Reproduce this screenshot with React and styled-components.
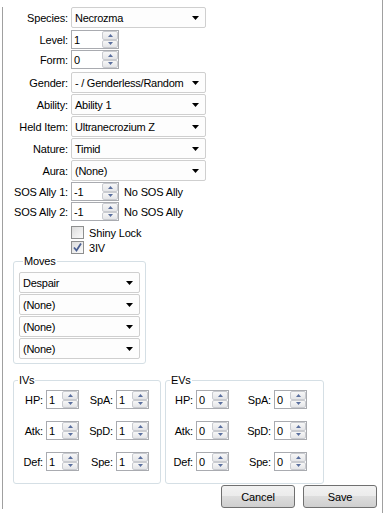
import styled, { createGlobalStyle } from 'styled-components';

const GlobalStyle = createGlobalStyle`
  body {
    margin: 0;
    background: #fff;
    font-family: "Liberation Sans", Arial, sans-serif;
    font-size: 11px;
    letter-spacing: -0.15px;
    color: #000;
  }
`;

const Arrow = ({ up, color = '#000', w = 7, h = 4 }) => (
  <svg width={w} height={h} viewBox={`0 0 ${w} ${h}`} style={{ display: 'block' }}>
    <polygon
      points={up ? `0,${h} ${w / 2},0 ${w},${h}` : `0,0 ${w},0 ${w / 2},${h}`}
      fill={color}
    />
  </svg>
);

const Combo = ({ value, width = 135 }) => (
  <ComboBox $width={width}>
    <ComboText>{value}</ComboText>
    <ComboArrow>
      <Arrow />
    </ComboArrow>
  </ComboBox>
);

const Spinner = ({ value, width = 48, height = 19 }) => (
  <NumBox $width={width} $h={height}>
    <NumText>{value}</NumText>
    <SpinCol>
      <SpinBtn>
        <Arrow up color="#5a6f9e" w={5} h={3} />
      </SpinBtn>
      <SpinBtn>
        <Arrow color="#5a6f9e" w={5} h={3} />
      </SpinBtn>
    </SpinCol>
  </NumBox>
);

const Check = ({ checked, label }) => (
  <CheckWrap>
    <CheckBox>
      {checked && (
        <svg width="11" height="11" viewBox="0 0 11 11">
          <path d="M2 5.5 L4.5 8.5 L9 1.5" stroke="#4a5f92" strokeWidth="1.8" fill="none" />
        </svg>
      )}
    </CheckBox>
    {label}
  </CheckWrap>
);

const StatGroup = ({ title, values, cols, width }) => (
  <Group $width={width}>
    <Legend>{title}</Legend>
    <StatGrid $cols={cols}>
      {[
        ['HP:', 'SpA:'],
        ['Atk:', 'SpD:'],
        ['Def:', 'Spe:'],
      ].map(([a, b]) => (
        <StatRowFrag key={a}>
          <StatLabel>{a}</StatLabel>
          <Spinner value={values} width={33} />
          <StatLabel>{b}</StatLabel>
          <Spinner value={values} width={33} />
        </StatRowFrag>
      ))}
    </StatGrid>
  </Group>
);

const App = () => (
  <>
    <GlobalStyle />
    <Window>
      <Panel>
        <Row $mt={7} $h={21}>
          <FieldLabel>Species:</FieldLabel>
          <Combo value="Necrozma" />
        </Row>
        <Row $mt={2} $h={19}>
          <FieldLabel>Level:</FieldLabel>
          <Spinner value="1" />
        </Row>
        <Row $mt={1} $h={19}>
          <FieldLabel>Form:</FieldLabel>
          <Spinner value="0" />
        </Row>
        <Row $mt={3} $h={21}>
          <FieldLabel>Gender:</FieldLabel>
          <Combo value="- / Genderless/Random" />
        </Row>
        <Row $mt={1} $h={21}>
          <FieldLabel>Ability:</FieldLabel>
          <Combo value="Ability 1" />
        </Row>
        <Row $mt={1} $h={21}>
          <FieldLabel>Held Item:</FieldLabel>
          <Combo value="Ultranecrozium Z" />
        </Row>
        <Row $mt={1} $h={21}>
          <FieldLabel>Nature:</FieldLabel>
          <Combo value="Timid" />
        </Row>
        <Row $mt={1} $h={21}>
          <FieldLabel>Aura:</FieldLabel>
          <Combo value="(None)" />
        </Row>
        <Row $mt={1} $h={19}>
          <FieldLabel>SOS Ally 1:</FieldLabel>
          <Spinner value="-1" />
          <Note>No SOS Ally</Note>
        </Row>
        <Row $mt={1} $h={19}>
          <FieldLabel>SOS Ally 2:</FieldLabel>
          <Spinner value="-1" />
          <Note>No SOS Ally</Note>
        </Row>
        <Row $mt={4} $h={15}>
          <FieldLabel />
          <Check label="Shiny Lock" />
        </Row>
        <Row $mt={0} $h={15}>
          <FieldLabel />
          <Check checked label="3IV" />
        </Row>

        <MovesGroup>
          <Legend>Moves</Legend>
          <MoveList>
            <Combo value="Despair" width={121} />
            <Combo value="(None)" width={121} />
            <Combo value="(None)" width={121} />
            <Combo value="(None)" width={121} />
          </MoveList>
        </MovesGroup>

        <StatsRow>
          <StatGroup title="IVs" values="1" width={148} cols="29px 33px 31px 33px" />
          <StatGroup title="EVs" values="0" width={159} cols="27px 33px 39px 33px" />
        </StatsRow>

        <ButtonBar>
          <Button>Cancel</Button>
          <Button>Save</Button>
        </ButtonBar>
      </Panel>
    </Window>
  </>
);

const Window = styled.div`
  width: 382px;
  height: 513px;
  border-right: 1px solid #a0a0a0;
  background: #fff;
  overflow: hidden;
`;

const Panel = styled.div`
  margin-left: 2px;
  height: 502px;
  border-left: 1px solid #a0a0a0;
`;

const Row = styled.div`
  display: flex;
  align-items: center;
  height: ${({ $h }) => $h}px;
  margin-top: ${({ $mt }) => $mt}px;
`;

const FieldLabel = styled.div`
  width: 65px;
  margin-right: 3px;
  text-align: right;
  white-space: nowrap;
  flex-shrink: 0;
`;

const ComboBox = styled.div`
  box-sizing: border-box;
  width: ${({ $width }) => $width}px;
  height: 21px;
  display: flex;
  align-items: center;
  border: 1px solid #cfcfcf;
  border-radius: 2px;
  background: #fdfdfd;
  flex-shrink: 0;
`;

const ComboText = styled.div`
  flex: 1;
  min-width: 0;
  padding-left: 3px;
  white-space: nowrap;
  letter-spacing: -0.25px;
`;

const ComboArrow = styled.div`
  margin-right: 6px;
  flex-shrink: 0;
`;

const NumBox = styled.div`
  box-sizing: border-box;
  display: flex;
  width: ${({ $width }) => $width}px;
  height: ${({ $h }) => $h}px;
  border: 1px solid #a9abb0;
  background: #fff;
  flex-shrink: 0;
`;

const NumText = styled.div`
  flex: 1;
  display: flex;
  align-items: center;
  padding-left: 2px;
`;

const SpinCol = styled.div`
  width: 16px;
  display: flex;
  flex-direction: column;
`;

const SpinBtn = styled.div`
  flex: 1;
  display: flex;
  align-items: center;
  justify-content: center;
  border: 1px solid #c9cbd0;
  border-radius: 2px;
  background: linear-gradient(#f7f7f7, #e4e5e8);
`;

const Note = styled.div`
  margin-left: 5px;
  white-space: nowrap;
`;

const CheckWrap = styled.div`
  display: flex;
  align-items: center;
  gap: 5px;
`;

const CheckBox = styled.div`
  box-sizing: border-box;
  width: 13px;
  height: 13px;
  border: 1px solid #8e8f8f;
  background: linear-gradient(135deg, #dcdcdc, #fbfbfb);
  display: flex;
  align-items: center;
  justify-content: center;
`;

const Group = styled.fieldset`
  box-sizing: border-box;
  width: ${({ $width }) => $width}px;
  margin: 0;
  padding: 3px 0 12px 0;
  border: 1px solid #d5dfe5;
  border-radius: 3px;
  min-width: 0;
`;

const Legend = styled.legend`
  padding: 0 1px;
  margin-left: 4px;
  line-height: 13px;
`;

const MovesGroup = styled(Group)`
  width: 133px;
  margin-left: 10px;
  padding: 4px 5px 4px 5px;
`;

const MoveList = styled.div`
  display: flex;
  flex-direction: column;
  gap: 1px;
`;

const StatsRow = styled.div`
  display: flex;
  gap: 4px;
  margin: 10px 0 0 10px;
`;

const StatGrid = styled.div`
  display: grid;
  grid-template-columns: ${({ $cols }) => $cols};
  column-gap: 3px;
  row-gap: 12px;
  align-items: center;
`;

const StatRowFrag = styled.div`
  display: contents;
`;

const StatLabel = styled.div`
  text-align: right;
  white-space: nowrap;
`;

const ButtonBar = styled.div`
  display: flex;
  justify-content: flex-end;
  gap: 8px;
  margin-top: 1px;
  padding-right: 5px;
`;

const Button = styled.div`
  box-sizing: border-box;
  width: 74px;
  height: 23px;
  display: flex;
  align-items: center;
  justify-content: center;
  border: 1px solid #707070;
  border-radius: 3px;
  background: linear-gradient(#f2f2f2 0%, #ebebeb 50%, #dddddd 50%, #cfcfcf 100%);
`;

export default App;
